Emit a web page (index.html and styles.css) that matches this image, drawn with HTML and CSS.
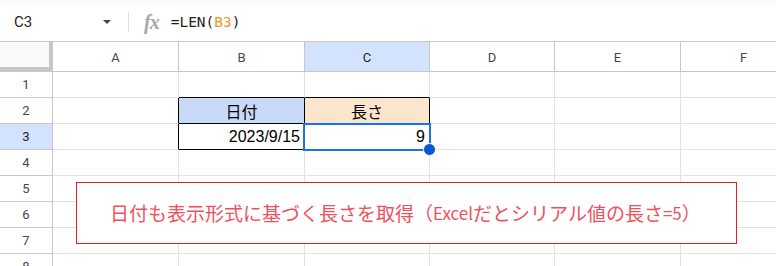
FILE: index.html
```html
<!DOCTYPE html>
<html lang="ja">
  <head>
    <meta charset="UTF-8" />
    <title>LEN関数</title>
    <link rel="stylesheet" href="styles.css">
  </head>
  <body>
    <div class="topbar"></div>
    <div class="formula-bar">
      <div class="name-box">C3</div>
      <span class="caret"></span>
      <span class="sep"></span>
      <span class="fx">fx</span>
      <div class="formula">=LEN(<span class="ref">B3</span>)</div>
    </div>

    <div class="sheet">
      <div class="grid">
        <div class="corner"></div>
        <div class="col-head">A</div>
        <div class="col-head">B</div>
        <div class="col-head active">C</div>
        <div class="col-head">D</div>
        <div class="col-head">E</div>
        <div class="col-head">F</div>

        <div class="row-head">1</div>
        <div class="cell"></div><div class="cell edge-bottom"></div><div class="cell edge-bottom"></div><div class="cell"></div><div class="cell"></div><div class="cell"></div>

        <div class="row-head">2</div>
        <div class="cell edge-right"></div>
        <div class="cell head-date boxed">日付</div>
        <div class="cell head-len boxed">長さ</div>
        <div class="cell"></div><div class="cell"></div><div class="cell"></div>

        <div class="row-head active">3</div>
        <div class="cell edge-right"></div>
        <div class="cell num boxed">2023/9/15</div>
        <div class="cell num boxed selected">9</div>
        <div class="cell"></div><div class="cell"></div><div class="cell"></div>

        <div class="row-head">4</div>
        <div class="cell"></div><div class="cell"></div><div class="cell"></div><div class="cell"></div><div class="cell"></div><div class="cell"></div>
        <div class="row-head">5</div>
        <div class="cell"></div><div class="cell"></div><div class="cell"></div><div class="cell"></div><div class="cell"></div><div class="cell"></div>
        <div class="row-head">6</div>
        <div class="cell"></div><div class="cell"></div><div class="cell"></div><div class="cell"></div><div class="cell"></div><div class="cell"></div>
        <div class="row-head">7</div>
        <div class="cell"></div><div class="cell"></div><div class="cell"></div><div class="cell"></div><div class="cell"></div><div class="cell"></div>
        <div class="row-head">8</div>
        <div class="cell"></div><div class="cell"></div><div class="cell"></div><div class="cell"></div><div class="cell"></div><div class="cell"></div>
      </div>

      <div class="note">日付も表示形式に基づく長さを取得（<span class="latin">Excel</span>だとシリアル値の長さ<span class="latin">=5</span>）</div>
    </div>
  </body>
</html>
```

FILE: styles.css
```css
* {
  box-sizing: border-box;
}
body {
  margin: 0;
  background: #fff;
  font-family: Roboto, "Liberation Sans", Arial, sans-serif;
  color: #1f1f1f;
  overflow: hidden;
}
.topbar {
  height: 5px;
  background: #f9fbfd;
}
.formula-bar {
  height: 37px;
  display: flex;
  align-items: center;
  border-bottom: 1px solid #c7c7c7;
  padding-bottom: 2px;
}
.name-box {
  width: 100px;
  padding-left: 14px;
  font-size: 15px;
  color: #1f1f1f;
}
.caret {
  width: 0;
  height: 0;
  border-left: 4px solid transparent;
  border-right: 4px solid transparent;
  border-top: 4px solid #444746;
  margin-left: 3px;
}
.sep {
  width: 1px;
  height: 20px;
  background: #dadce0;
  margin-left: 17px;
}
.fx {
  font-family: "Liberation Serif", serif;
  font-style: italic;
  font-weight: bold;
  font-size: 20px;
  color: #a6a6a6;
  margin-left: 15px;
  letter-spacing: -1px;
}
.formula {
  margin-left: 12px;
  font-family: "DejaVu Sans Mono", monospace;
  font-size: 14.5px;
  color: #1f1f1f;
}
.formula .ref {
  color: #f6951f;
}
.sheet {
  position: relative;
}
.grid {
  display: grid;
  grid-template-columns: 53px 126px 126px 125px 125px 126px 126px;
  grid-template-rows: 30px repeat(8, 26px);
}
.corner {
  background: #f8f9fa;
  border-right: 4px solid #c7c7c7;
  border-bottom: 5px solid #c7c7c7;
}
.col-head {
  display: flex;
  align-items: center;
  justify-content: center;
  font-size: 13px;
  color: #444746;
  border-right: 1px solid #c7c7c7;
  border-bottom: 1px solid #c7c7c7;
  padding-top: 1px;
}
.col-head.active,
.row-head.active {
  background: #d3e3fd;
  color: #1f1f1f;
}
.row-head {
  display: flex;
  align-items: center;
  justify-content: center;
  font-size: 13px;
  color: #444746;
  border-right: 1px solid #c7c7c7;
  border-bottom: 1px solid #c7c7c7;
}
.cell {
  border-right: 1px solid #e1e1e1;
  border-bottom: 1px solid #e1e1e1;
  font-family: "Liberation Sans", Arial, "Noto Sans CJK JP", sans-serif;
  font-size: 16px;
  display: flex;
  align-items: center;
  padding: 0 4px;
  color: #000;
}
.edge-right {
  border-right-color: #000;
}
.edge-bottom {
  border-bottom-color: #000;
}
.boxed {
  border-right-color: #000;
  border-bottom-color: #000;
}
.head-date {
  background: #c9daf8;
  justify-content: center;
}
.head-len {
  background: #fce5cd;
  justify-content: center;
}
.num {
  justify-content: flex-end;
}
.selected {
  position: relative;
}
.selected::after {
  content: "";
  position: absolute;
  left: -2px;
  top: -1px;
  right: -2px;
  bottom: -2px;
  border: 2px solid #1a73e8;
}
.selected::before {
  content: "";
  position: absolute;
  right: -7px;
  bottom: -7px;
  width: 11px;
  height: 11px;
  border-radius: 50%;
  background: #0b57d0;
  border: 1px solid #fff;
  z-index: 1;
}
.note {
  position: absolute;
  left: 76px;
  top: 140px;
  width: 661px;
  height: 62px;
  border: 1px solid #e41d25;
  background: #fff;
  color: #f0505c;
  font-family: "Noto Sans CJK JP", sans-serif;
  font-size: 19px;
  display: flex;
  align-items: center;
  padding-left: 33px;
  padding-bottom: 2px;
}
.note .latin {
  font-size: 17px;
}
```
